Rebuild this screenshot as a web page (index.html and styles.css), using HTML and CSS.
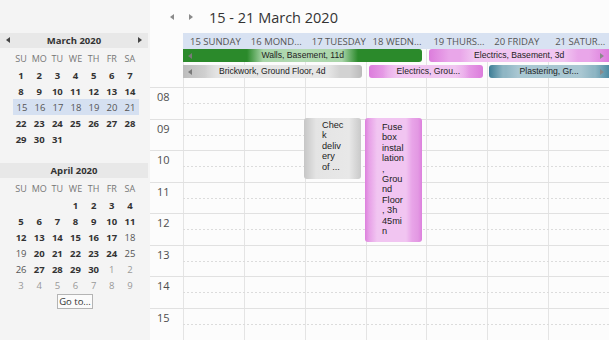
FILE: index.html
```html
<!DOCTYPE html>
<html lang="en">
<head>
    <meta charset="UTF-8">
    <title>Week view</title>
    <link rel="stylesheet" href="styles.css">
</head>
<body>
<div class="app">
    <aside class="side">
        <div class="month">
            <div class="mhead"><span class="tri tri-l"></span><b>March 2020</b><span class="tri tri-r"></span></div>
            <div class="week names"><span>SU</span><span>MO</span><span>TU</span><span>WE</span><span>TH</span><span>FR</span><span>SA</span></div>
            <div class="week b"><span>1</span><span>2</span><span>3</span><span>4</span><span>5</span><span>6</span><span>7</span></div>
            <div class="week b"><span>8</span><span>9</span><span>10</span><span>11</span><span>12</span><span>13</span><span>14</span></div>
            <div class="week sel"><span>15</span><span>16</span><span>17</span><span>18</span><span>19</span><span>20</span><span>21</span></div>
            <div class="week b"><span>22</span><span>23</span><span>24</span><span>25</span><span>26</span><span>27</span><span>28</span></div>
            <div class="week b"><span>29</span><span>30</span><span>31</span></div>
            <div class="week"></div>
        </div>
        <div class="month">
            <div class="mhead"><b>April 2020</b></div>
            <div class="week names"><span>SU</span><span>MO</span><span>TU</span><span>WE</span><span>TH</span><span>FR</span><span>SA</span></div>
            <div class="week b"><span></span><span></span><span></span><span>1</span><span>2</span><span>3</span><span>4</span></div>
            <div class="week b"><span>5</span><span>6</span><span>7</span><span>8</span><span>9</span><span>10</span><span>11</span></div>
            <div class="week b"><span>12</span><span>13</span><span>14</span><span>15</span><span>16</span><span>17</span><span class="n">18</span></div>
            <div class="week b"><span class="n">19</span><span>20</span><span>21</span><span>22</span><span>23</span><span>24</span><span class="n">25</span></div>
            <div class="week b"><span class="n">26</span><span>27</span><span>28</span><span>29</span><span>30</span><span class="o">1</span><span class="o">2</span></div>
            <div class="week"><span class="o">3</span><span class="o">4</span><span class="o">5</span><span class="o">6</span><span class="o">7</span><span class="o">8</span><span class="o">9</span></div>
        </div>
        <button class="goto">Go to...</button>
    </aside>

    <main class="main">
        <div class="top">
            <span class="tri tri-l gray"></span>
            <span class="tri tri-r gray"></span>
            <h1>15 - 21 March 2020</h1>
        </div>
        <div class="dayhead">
            <span>15 SUNDAY</span><span>16 MOND...</span><span>17 TUESDAY</span><span>18 WEDN...</span><span>19 THURS...</span><span>20 FRIDAY</span><span>21 SATUR...</span>
        </div>
        <div class="allday">
            <div class="bar green s1-5 open-l"><i class="tri tri-l dim"></i><span class="lbl">Walls, Basement, 11d</span><i></i></div>
            <div class="bar pink s5-8 open-r"><i></i><span class="lbl">Electrics, Basement, 3d</span><i class="tri tri-r dim"></i></div>
            <div class="bar grey s1-4 open-l"><i class="tri tri-l dim"></i><span class="lbl">Brickwork, Ground Floor, 4d</span><i></i></div>
            <div class="bar pink s4-6"><i></i><span class="lbl">Electrics, Grou...</span><i></i></div>
            <div class="bar teal s6-8 open-r"><i></i><span class="lbl">Plastering, Gr...</span><i class="tri tri-r dim"></i></div>
        </div>
        <div class="grid">
            <div class="hour first"></div>
            <div class="hour"><span class="time">08</span><div class="half"></div></div>
            <div class="hour"><span class="time">09</span><div class="half"></div></div>
            <div class="hour"><span class="time">10</span><div class="half"></div></div>
            <div class="hour"><span class="time">11</span><div class="half"></div></div>
            <div class="hour"><span class="time">12</span><div class="half"></div></div>
            <div class="hour"><span class="time">13</span><div class="half"></div></div>
            <div class="hour"><span class="time">14</span><div class="half"></div></div>
            <div class="hour"><span class="time">15</span><div class="half"></div></div>

            <!-- events sit over the time grid -->
            <div class="ev ev-grey" style="left:154px;top:38px;height:61px">Chec<br>k<br>deliv<br>ery<br>of ...</div>
            <div class="ev ev-pink" style="left:215px;top:38px;height:124px">Fuse<br>box<br>instal<br>lation<br>,<br>Grou<br>nd<br>Floor<br>, 3h<br>45mi<br>n</div>
        </div>
    </main>
</div>
</body>
</html>
```

FILE: styles.css
```css
*{
    box-sizing: border-box;
}
body{
    margin: 0;
    background: #fcfcfc;
    font-family: "Open Sans", "Noto Sans", sans-serif;
    color: #333;
}
.app{
    display: flex;
    width: 609px;
    height: 340px;
    overflow: hidden;
}

/* mini calendars */
.side{
    width: 150px;
    flex: none;
    padding-top: 33px;
    background: #f4f4f4;
    display: flex;
    flex-direction: column;
    align-items: stretch;
}
.mhead{
    height: 15px;
    margin: 0 2px 2px 0;
    background: #e8e8e8;
    display: flex;
    align-items: center;
    justify-content: center;
    position: relative;
    font-size: 9.5px;
    color: #333;
}
.mhead b{
    font-weight: 700;
}
.mhead .tri-l{
    position: absolute;
    left: 6px;
    top: 4px;
}
.mhead .tri-r{
    position: absolute;
    right: 6px;
    top: 4px;
}
.week{
    display: grid;
    grid-template-columns: repeat(7, 1fr);
    width: 127px;
    height: 16px;
    margin-left: 12px;
    align-items: center;
    font-size: 9.5px;
    color: #555;
}
.week span{
    text-align: center;
}
.week.names{
    margin-bottom: 1px;
    color: #777;
    font-size: 9px;
}
.week.b span{
    font-weight: 700;
    color: #333;
}
.week.b span.n{
    font-weight: 400;
    color: #555;
}
.week span.o{
    font-weight: 400;
    color: #999;
}
.week.sel{
    background: #d5e0f1;
    width: 126px;
    margin-left: 13px;
}
.goto{
    align-self: center;
    margin-top: 1px;
    width: 36px;
    height: 15px;
    padding: 0;
    border: 1px solid #b4b4b4;
    background: #fbfbfb;
    font-family: inherit;
    font-size: 9.5px;
    color: #333;
    line-height: 12px;
}

/* little triangles */
.tri{
    display: inline-block;
    width: 0;
    height: 0;
    border-top: 3.5px solid transparent;
    border-bottom: 3.5px solid transparent;
}
.tri-l{
    border-right: 4px solid #444;
}
.tri-r{
    border-left: 4px solid #444;
}
.tri.gray.tri-l{
    border-right-color: #8a8a8a;
}
.tri.gray.tri-r{
    border-left-color: #8a8a8a;
}
.tri.dim.tri-l{
    border-right-color: #7a7a7a;
}
.tri.dim.tri-r{
    border-left-color: #8a8a8a;
}

/* week view */
.main{
    flex: 1;
    display: flex;
    flex-direction: column;
    min-width: 0;
}
.top{
    height: 33px;
    display: flex;
    align-items: center;
    padding-left: 20px;
    padding-top: 1px;
}
.top .tri-r{
    margin-left: 15px;
}
.top h1{
    margin: 0 0 0 16px;
    font-weight: 400;
    font-size: 14.5px;
    color: #333;
}
.dayhead{
    height: 16px;
    margin-left: 33px;
    background: #d8e2f2;
    display: grid;
    grid-template-columns: repeat(7, 1fr);
    align-items: center;
    font-size: 9.5px;
    color: #555;
}
.dayhead span{
    padding-left: 7px;
    white-space: nowrap;
    overflow: hidden;
}
.allday{
    height: 31px;
    margin-left: 33px;
    padding-bottom: 2px;
    display: grid;
    grid-template-columns: repeat(7, 1fr);
    grid-template-rows: 13px 13px;
    row-gap: 3px;
    background: repeating-linear-gradient(to right, #e4e4e4 0 1px, transparent 1px 60.857px);
    font-family: "Liberation Sans", Arial, sans-serif;
    font-size: 8.6px;
    color: #222;
}
.bar{
    display: grid;
    grid-template-columns: 14px minmax(0, 1fr) 14px;
    align-items: center;
    border-radius: 3px;
    min-width: 0;
}
.bar .lbl{
    justify-self: center;
    max-width: 100%;
    padding: 0 14px;
    line-height: 13px;
    white-space: nowrap;
    overflow: hidden;
}
.bar .tri{
    justify-self: center;
    border-top-width: 3px;
    border-bottom-width: 3px;
}
.open-l{
    border-top-left-radius: 0;
    border-bottom-left-radius: 0;
}
.open-r{
    border-top-right-radius: 0;
    border-bottom-right-radius: 0;
}
.s1-5{ grid-column: 1 / 5; grid-row: 1; margin-right: 4px; }
.s5-8{ grid-column: 5 / 8; grid-row: 1; margin-left: 3px; }
.s1-4{ grid-column: 1 / 4; grid-row: 2; margin-right: 4px; }
.s4-6{ grid-column: 4 / 6; grid-row: 2; margin-left: 3px; margin-right: 4px; }
.s6-8{ grid-column: 6 / 8; grid-row: 2; margin-left: 2px; }

.green{ background: #2b8a2b; }
.green .lbl{
    background: linear-gradient(to right, rgba(160,208,160,0), #a9d5a9 16px, #b3dab3 50%, #a9d5a9 calc(100% - 16px), rgba(160,208,160,0));
}
.pink{ background: linear-gradient(to right, #dc7cdc, #e9a6e9 20px, #e9a6e9 calc(100% - 20px), #dc7cdc); }
.pink .lbl{
    background: linear-gradient(to right, rgba(240,194,240,0), #f1c6f1 14px, #f1c6f1 calc(100% - 14px), rgba(240,194,240,0));
}
.grey{ background: linear-gradient(to right, #bdbdbd, #d2d2d2 25px, #d2d2d2 calc(100% - 12px), #bababa); }
.grey .lbl{
    background: linear-gradient(to right, rgba(230,230,230,0), #e4e4e4 12px, #e6e6e6 calc(100% - 12px), rgba(230,230,230,0));
}
.teal{ background: linear-gradient(to right, #3d7d95, #8fb6c4 14px, #8fb6c4 calc(100% - 14px), #4f8ca3); }
.teal .lbl{
    background: linear-gradient(to right, rgba(170,200,212,0), #a9c7d2 12px, #a9c7d2 calc(100% - 12px), rgba(170,200,212,0));
}

.grid{
    position: relative;
    flex: 1;
    overflow: hidden;
    background: repeating-linear-gradient(to right, #e4e4e4 0 1px, transparent 1px 60.857px) no-repeat right top / calc(100% - 33px) 100%;
}
.hour{
    height: 31.5px;
    border-top: 1px solid #e1e1e1;
    display: flex;
}
.hour.first{
    height: 7px;
    border-top: 0;
}
.time{
    width: 33px;
    flex: none;
    padding: 1px 0 0 7px;
    font-size: 11px;
    line-height: 15px;
    color: #4d4d4d;
}
.half{
    flex: 1;
    height: 16px;
    background: repeating-linear-gradient(to right, #dcdcdc 0 2px, transparent 2px 4px) no-repeat left bottom / 100% 1px;
}
.ev{
    position: absolute;
    width: 57px;
    border-radius: 3px;
    padding: 2px 0 0 18px;
    font-family: "Liberation Sans", Arial, sans-serif;
    font-size: 9.2px;
    line-height: 10.4px;
    color: #222;
}
.ev-grey{
    background: linear-gradient(to right, #c6c6c6, #e4e4e4 12px, #e8e8e8 calc(100% - 12px), #c9c9c9);
}
.ev-pink{
    padding-top: 4px;
    padding-left: 17px;
    background: linear-gradient(to right, #dd80dd, #e7a0e7 4px, #f1c5f1 12px, #f1c5f1 calc(100% - 16px), #e8a4e8 calc(100% - 10px), #e399e3 calc(100% - 4px), #dd80dd);
}
```
